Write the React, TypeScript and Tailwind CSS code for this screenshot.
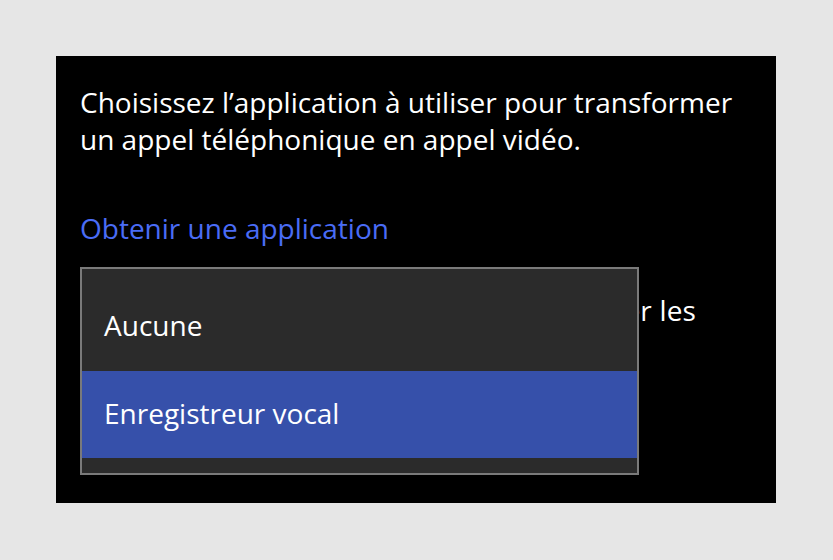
export default function App() {
  return (
    <div className="w-[833px] h-[560px] bg-[#e6e6e6] p-[56px] font-['Open_Sans',sans-serif]">
      <div className="relative w-[720px] h-[447px] bg-black px-6 pt-[28px] text-white">
        <p className="text-[28px] leading-[37px]">
          Choisissez l’application à utiliser pour transformer un appel téléphonique en appel vidéo.
        </p>

        <a className="block mt-[52px] text-[28px] leading-[37px] text-[#4a6cf5]">
          Obtenir une application
        </a>

        <p className="mt-[45px] text-[28px] leading-[37px] tracking-[0.17px]">
          Choisissez une application pour enregistrer les appels.
        </p>

        {/* open picker */}
        <div className="absolute left-6 top-[211px] w-[559px] h-[208px] border-2 border-[#7a7a7a] bg-[#2b2b2b] pt-[13px]">
          <div className="h-[89px] flex items-center px-[22px] pb-1 text-[28px]">Aucune</div>
          <div className="h-[87px] flex items-center px-[22px] pb-1 text-[28px] bg-[#3650aa]">
            Enregistreur vocal
          </div>
        </div>
      </div>
    </div>
  )
}
